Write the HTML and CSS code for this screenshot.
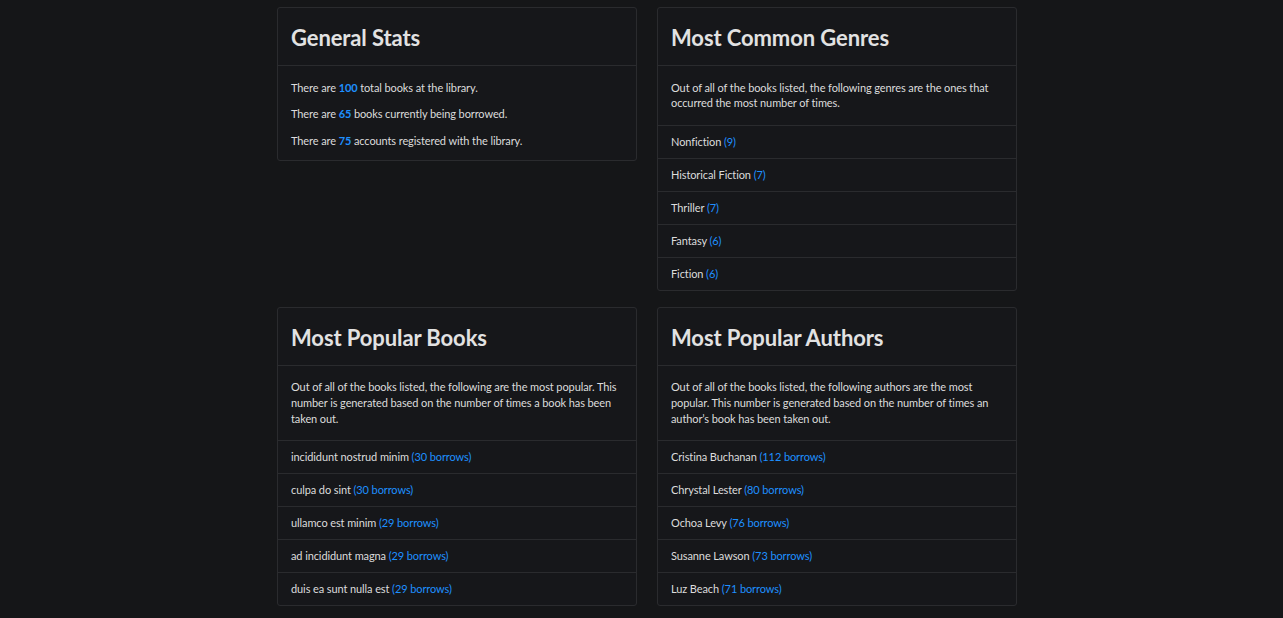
FILE: index.html
```html
<!DOCTYPE html>
<html>
<head>
<meta charset="utf-8">
<link rel="stylesheet" href="styles.css">
</head>
<body>
<main class="grid">
  <section class="card">
    <h2 class="card-title">General Stats</h2>
    <div class="card-body card-body--stats">
      <p>There are <b class="num">100</b> total books at the library.</p>
      <p>There are <b class="num">65</b> books currently being borrowed.</p>
      <p>There are <b class="num">75</b> accounts registered with the library.</p>
    </div>
  </section>
  <section class="card">
    <h2 class="card-title">Most Common Genres</h2>
    <div class="card-body">
      <p>Out of all of the books listed, the following genres are the ones that occurred the most number of times.</p>
    </div>
    <ul class="list">
      <li>Nonfiction <span class="count">(9)</span></li>
      <li>Historical Fiction <span class="count">(7)</span></li>
      <li>Thriller <span class="count">(7)</span></li>
      <li>Fantasy <span class="count">(6)</span></li>
      <li>Fiction <span class="count">(6)</span></li>
    </ul>
  </section>
  <section class="card">
    <h2 class="card-title">Most Popular Books</h2>
    <div class="card-body">
      <p>Out of all of the books listed, the following are the most popular. This number is generated based on the number of times a book has been taken out.</p>
    </div>
    <ul class="list">
      <li>incididunt nostrud minim <span class="count">(30 borrows)</span></li>
      <li>culpa do sint <span class="count">(30 borrows)</span></li>
      <li>ullamco est minim <span class="count">(29 borrows)</span></li>
      <li>ad incididunt magna <span class="count">(29 borrows)</span></li>
      <li>duis ea sunt nulla est <span class="count">(29 borrows)</span></li>
    </ul>
  </section>
  <section class="card">
    <h2 class="card-title">Most Popular Authors</h2>
    <div class="card-body">
      <p>Out of all of the books listed, the following authors are the most popular. This number is generated based on the number of times an author’s book has been taken out.</p>
    </div>
    <ul class="list">
      <li>Cristina Buchanan <span class="count">(112 borrows)</span></li>
      <li>Chrystal Lester <span class="count">(80 borrows)</span></li>
      <li>Ochoa Levy <span class="count">(76 borrows)</span></li>
      <li>Susanne Lawson <span class="count">(73 borrows)</span></li>
      <li>Luz Beach <span class="count">(71 borrows)</span></li>
    </ul>
  </section>
</main>
</body>
</html>
```

FILE: styles.css
```css
html, body {
  margin: 0;
  padding: 0;
  background: #151618;
}
body {
  font-family: "Lato", "Liberation Sans", sans-serif;
  font-size: 11px;
  line-height: 16px;
  letter-spacing: -0.1px;
  color: #dcdcdc;
}
.grid {
  display: grid;
  grid-template-columns: 360px 360px;
  column-gap: 20px;
  row-gap: 16px;
  align-items: start;
  width: 740px;
  padding: 7px 0 12px 277px;
}
.card {
  background: #16171a;
  border: 1px solid #2a2b2e;
  border-radius: 3px;
}
.card-title {
  margin: 0;
  height: 58px;
  box-sizing: border-box;
  padding: 16px 13px 0;
  font-size: 22px;
  line-height: 28px;
  font-weight: 700;
  letter-spacing: -0.1px;
  color: #e2e2e2;
  border-bottom: 1px solid #2a2b2e;
}
.card-body {
  padding: 13.5px 13px 13.5px;
}
.card-body p {
  margin: 0 0 11px;
  line-height: 15.75px;
}
.card-body p:last-child {
  margin-bottom: 0;
}
.card-body--stats {
  padding-bottom: 11.5px;
}
.num {
  color: #1e90ff;
  font-weight: 700;
}
.list {
  list-style: none;
  margin: 0;
  padding: 0;
}
.list li {
  border-top: 1px solid #2a2b2e;
  padding: 8px 13px;
}
.count {
  color: #1e90ff;
}
```
